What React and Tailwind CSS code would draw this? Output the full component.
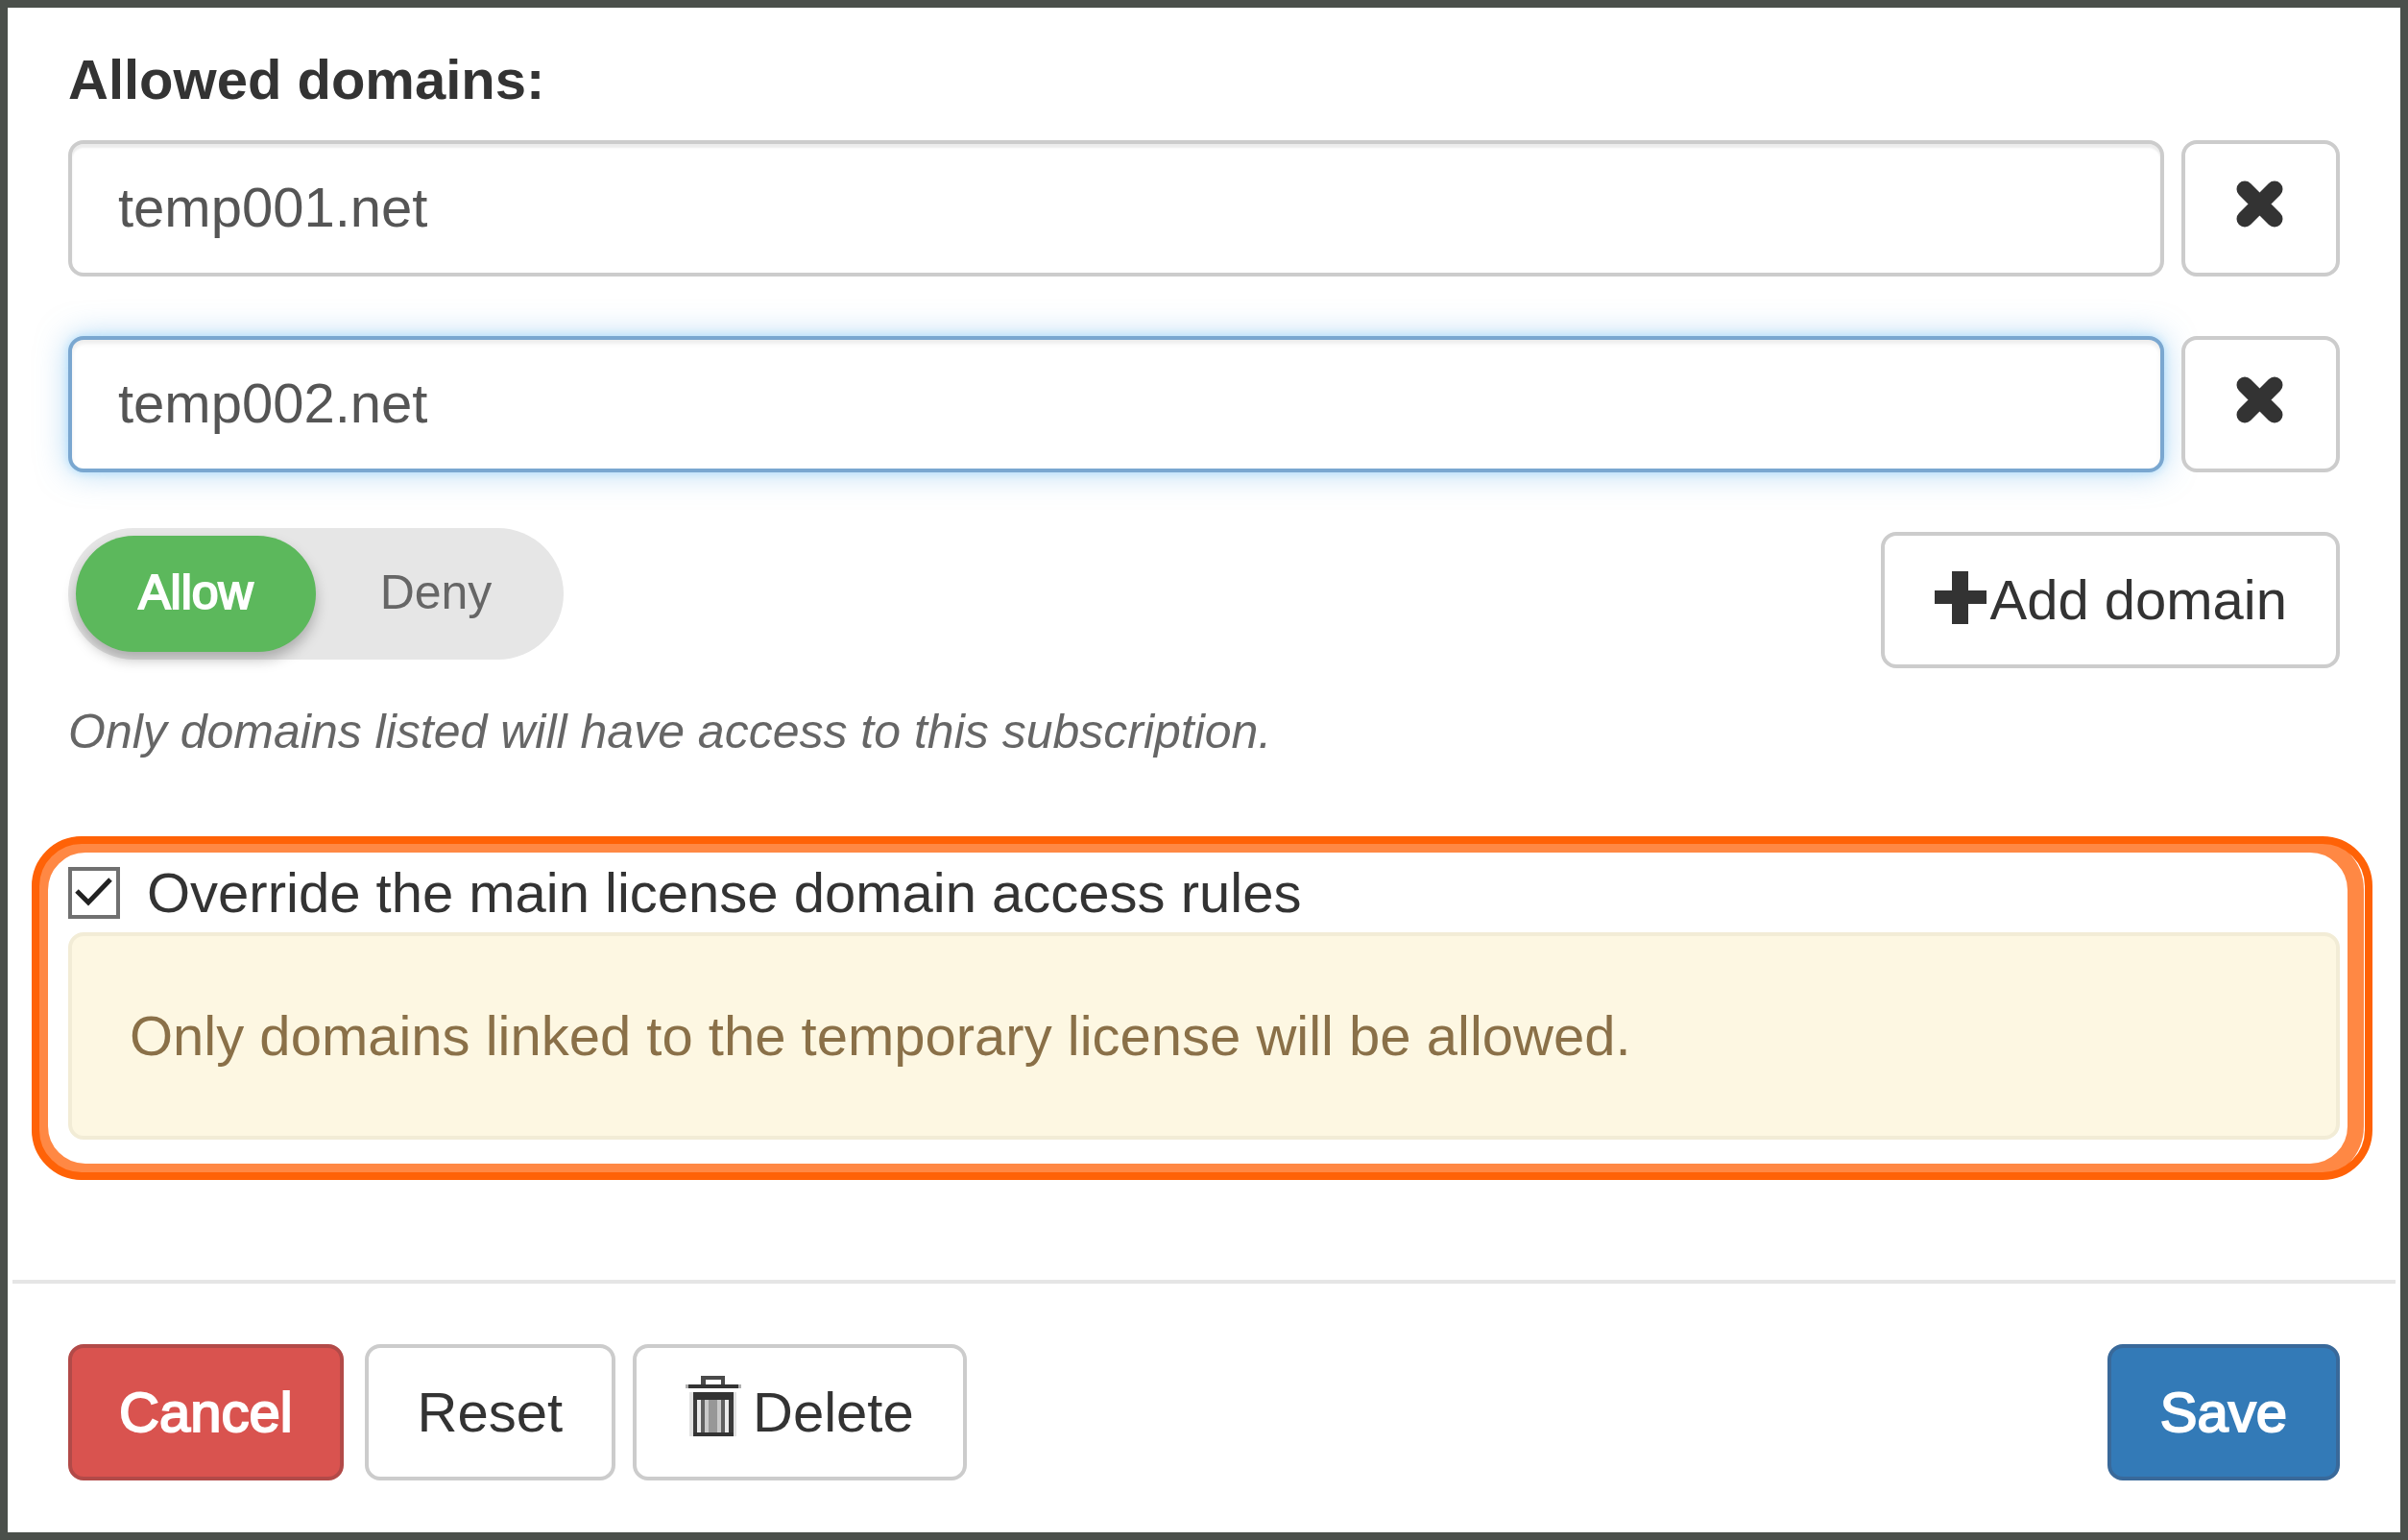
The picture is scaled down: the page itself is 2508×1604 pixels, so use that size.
import React, { useState } from "react";

const buttonBase =
  "flex h-[142px] shrink-0 items-center justify-center rounded-[16px] border-4 text-[58px] leading-[80px]";
const buttonPlain = "border-[#cccccc] bg-white text-[#333333]";
const heavyWhite = "text-white [-webkit-text-stroke:2px_white]";

function RemoveIcon() {
  return (
    <svg className="mr-1 mb-2 h-[52px] w-[52px]" viewBox="0 0 52 52" aria-hidden="true">
      <path
        d="M11 10 L42 41 M42 10 L11 41"
        fill="none"
        stroke="#333333"
        strokeWidth="17"
        strokeLinecap="round"
      />
    </svg>
  );
}

function PlusIcon() {
  return (
    <svg className="mb-1 h-[56px] w-[56px]" viewBox="0 0 56 56" aria-hidden="true">
      <path d="M19 0H36V20H55V34H36V55H19V34H1V20H19Z" fill="#333333" />
    </svg>
  );
}

function TrashIcon() {
  return (
    <svg className="mb-3 h-[64px] w-[58px]" viewBox="0 0 58 64" aria-hidden="true">
      <path d="M16 9V0H41V9H37V4H21V9Z" fill="#4a4a4a" />
      <path d="M3 9H55V13H3Z" fill="#333333" />
      <path d="M0 9H3V13H0ZM55 9H58V13H55Z" fill="#b0b0b0" />
      <path d="M4 17H8V63H4ZM50 17H53V63H50Z" fill="#e2e2e2" />
      <path d="M8 17H50V25H8ZM8 59H50V63H8Z" fill="#333333" />
      <path d="M8 25H12V59H8ZM45 25H50V59H45Z" fill="#3c3c3c" />
      <path d="M12 25H16V59H12ZM41 25H45V59H41Z" fill="#ebebeb" />
      <path d="M16 25H20V59H16ZM37 25H41V59H37Z" fill="#606060" />
      <path d="M20 25H24V59H20ZM33 25H37V59H33Z" fill="#c9c9c9" />
      <path d="M24 25H33V59H24Z" fill="#979797" />
    </svg>
  );
}

function DomainRow({ id, value, onChange, focused }) {
  return (
    <div className="flex items-center gap-[18px]">
      <input
        id={id}
        aria-label="Domain"
        type="text"
        value={value}
        onChange={onChange}
        className={
          "h-[142px] min-w-0 flex-1 rounded-[16px] border-4 bg-white px-12 pb-1 text-[58px] leading-[80px] text-[#555555] outline-none " +
          (focused
            ? "border-[#7aa7d0] shadow-[inset_0_4px_4px_rgba(0,0,0,0.075),0_0_8px_rgba(150,215,255,0.6),0_0_32px_rgba(102,175,233,0.5)]"
            : "border-[#cccccc] shadow-[inset_0_4px_2px_rgba(0,0,0,0.075)]")
        }
      />
      <button
        type="button"
        aria-label="Remove domain"
        className={`${buttonBase} ${buttonPlain} w-[165px]`}
      >
        <RemoveIcon />
      </button>
    </div>
  );
}

export default function App() {
  const [domains, setDomains] = useState(["temp001.net", "temp002.net"]);
  const [mode, setMode] = useState("allow");
  const [override, setOverride] = useState(true);

  const segment =
    "flex h-[121px] cursor-pointer items-center justify-center rounded-full pb-1 text-[50px] leading-[64px]";
  const active = `bg-[#5cb85c] shadow-[0_8px_14px_rgba(0,0,0,0.25)] ${heavyWhite}`;

  return (
    <form
      className="flex min-h-screen flex-col border-8 border-[#4b504b] bg-white font-['Liberation_Sans',Arial,sans-serif] text-[58px] leading-[80px] text-[#333333]"
      onSubmit={(e) => e.preventDefault()}
    >
      <div className="px-[63px] pt-[35px]">
        <label htmlFor="domain-0" className="block font-bold">
          Allowed domains:
        </label>
        <div className="mt-[23px] flex flex-col gap-[62px]">
          {domains.map((d, i) => (
            <DomainRow
              key={i}
              id={`domain-${i}`}
              value={d}
              focused={i === 1}
              onChange={(e) =>
                setDomains(domains.map((v, j) => (j === i ? e.target.value : v)))
              }
            />
          ))}
        </div>

        <div className="mt-[58px] flex items-start justify-between">
          <div
            role="radiogroup"
            aria-label="Domain access"
            className="relative flex rounded-full bg-[#e6e6e6] p-2"
          >
            <label className={`${segment} w-[250px] ${mode === "allow" ? active : "text-[#666666]"}`}>
              <input
                type="radio"
                name="mode"
                className="sr-only"
                checked={mode === "allow"}
                onChange={() => setMode("allow")}
              />
              Allow
            </label>
            <label className={`${segment} w-[250px] ${mode === "deny" ? active : "text-[#666666]"}`}>
              <input
                type="radio"
                name="mode"
                className="sr-only"
                checked={mode === "deny"}
                onChange={() => setMode("deny")}
              />
              Deny
            </label>
          </div>
          <button type="button" className={`${buttonBase} ${buttonPlain} mt-1 gap-0.5 px-[51px]`}>
            <PlusIcon />
            Add domain
          </button>
        </div>

        <p className="mt-[34px] text-[50px] leading-[64px] text-[#666666] italic">
          Only domains listed will have access to this subscription.
        </p>
      </div>

      <section className="relative mt-[77px] mr-[29px] ml-[25px] pt-[19px] pr-[34px] pb-[42px] pl-[38px]">
        <div className="pointer-events-none absolute inset-0 right-[9px] rounded-[56px] border-[17px] border-[#ff8844]" />
        <div className="pointer-events-none absolute inset-0 rounded-[52px] border-8 border-[#ff6207]" />
        <div className="flex items-center gap-7">
          <span className="relative flex">
            <input
              id="override"
              type="checkbox"
              checked={override}
              onChange={(e) => setOverride(e.target.checked)}
              className="h-[54px] w-[54px] appearance-none border-4 border-[#707070] bg-white"
            />
            {override && (
              <svg
                className="pointer-events-none absolute inset-0 h-[54px] w-[54px]"
                viewBox="0 0 54 54"
                aria-hidden="true"
              >
                <path d="M9 25 L21 37 L44 13" fill="none" stroke="#222222" strokeWidth="5" />
              </svg>
            )}
          </span>
          <label htmlFor="override">Override the main license domain access rules</label>
        </div>
        <div
          role="alert"
          className="mt-px rounded-[16px] border-4 border-[#f2ecd6] bg-[#fdf7e2] px-[60px] py-16 text-[#8a7048]"
        >
          Only domains linked to the temporary license will be allowed.
        </div>
      </section>

      <footer className="mx-[5px] mt-[104px] flex items-center justify-between border-t-4 border-[#e5e5e5] px-[58px] pt-[63px] pb-[54px]">
        <div className="flex items-center">
          <button
            type="button"
            className={`${buttonBase} ${heavyWhite} mr-[22px] border-[#b24a48] bg-[#d9534f] px-[49px]`}
          >
            Cancel
          </button>
          <button type="reset" className={`${buttonBase} ${buttonPlain} mr-[18px] px-[51px]`}>
            Reset
          </button>
          <button type="button" className={`${buttonBase} ${buttonPlain} gap-3 px-[51px]`}>
            <TrashIcon />
            Delete
          </button>
        </div>
        <button
          type="submit"
          className={`${buttonBase} ${heavyWhite} border-[#39699a] bg-[#337ab7] px-[51px]`}
        >
          Save
        </button>
      </footer>
    </form>
  );
}
